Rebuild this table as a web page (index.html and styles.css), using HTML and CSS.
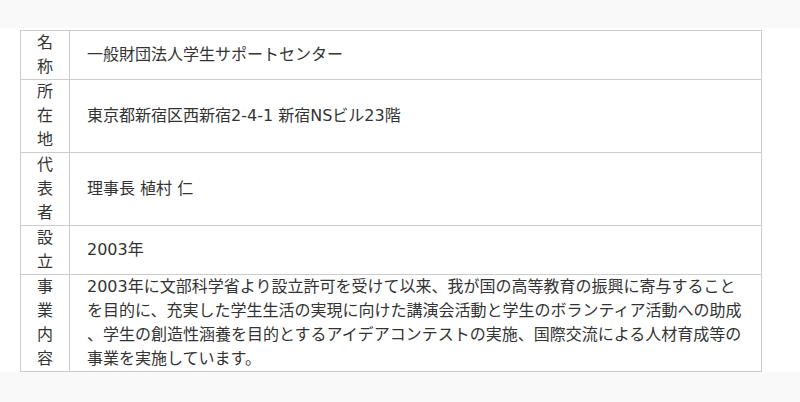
FILE: index.html
```html
<!DOCTYPE html>
<html lang="ja">
<head>
    <meta charset="UTF-8">
    <meta name="viewport" content="width=device-width, initial-scale=1.0">
    <title>法人概要</title>
    <link rel="stylesheet" href="styles.css">
</head>
<body>
    <div class="topband"></div>
    <div class="content">
        <table class="outline">
            <tr><th>名称</th><td>一般財団法人学生サポートセンター</td></tr>
            <tr><th>所在地</th><td>東京都新宿区西新宿2-4-1 新宿NSビル23階</td></tr>
            <tr><th>代表者</th><td>理事長 植村 仁</td></tr>
            <tr><th>設立</th><td>2003年</td></tr>
            <tr><th>事業内容</th><td>2003年に文部科学省より設立許可を受けて以来、我が国の高等教育の振興に寄与すること<br>を目的に、充実した学生生活の実現に向けた講演会活動と学生のボランティア活動への助成<br>、学生の創造性涵養を目的とするアイデアコンテストの実施、国際交流による人材育成等の<br>事業を実施しています。</td></tr>
        </table>
    </div>
</body>
</html>
```

FILE: styles.css
```css
body {
    margin: 0;
    background-color: #f9f9f9;
    font-family: "DejaVu Sans", "Noto Sans CJK JP", sans-serif;
    font-size: 16px;
    color: #333;
}
.topband {
    height: 28px;
}
.content {
    background-color: #fff;
    padding: 2px 38px 0 20px;
}
.outline {
    width: 100%;
    border-collapse: collapse;
    border: 1px solid #ccc;
}
.outline th,
.outline td {
    border: 1px solid #ccc;
    line-height: 24px;
    padding: 0;
    vertical-align: middle;
}
.outline th {
    width: 24px;
    padding: 0 12px;
    font-weight: normal;
    text-align: center;
}
.outline td {
    padding: 0 8px 0 17px;
    text-align: left;
}
```
